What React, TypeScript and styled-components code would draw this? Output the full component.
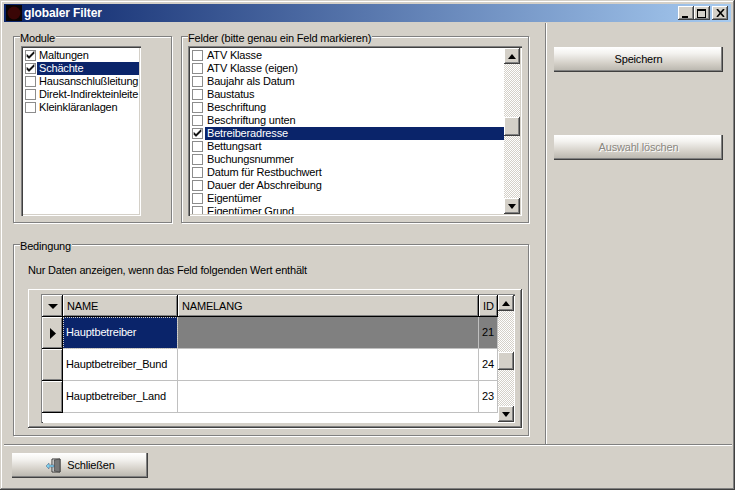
import React from "react";
import styled, { createGlobalStyle } from "styled-components";

const Global = createGlobalStyle`
  html, body { margin: 0; padding: 0; background: #d4d0c8; }
  * { box-sizing: border-box; }
`;
const FONT = `"Liberation Sans", Arial, sans-serif`;
const Window = styled.div`
  width: 735px; height: 490px; background: #d4d0c8; display: flex; flex-direction: column;
  padding: 4px 3px 3px 4px; font: 11px/13px ${FONT}; letter-spacing: -0.18px; color: #000; overflow: hidden;
  box-shadow: inset -1px -1px #404040, inset 1px 1px #d4d0c8, inset -2px -2px #808080, inset 2px 2px #fff;
`;
const TitleBar = styled.div`
  height: 18px; flex: none; display: flex; align-items: center; padding: 0 3px 0 2px; margin-right: 1px;
  background: linear-gradient(90deg, #0a246a, #a6caf0); color: #fff;
`;
const AppIcon = styled.svg`width: 16px; height: 16px; flex: none;`;
const TitleText = styled.div`font: bold 12px/16px "Liberation Sans", sans-serif; letter-spacing: -0.1px; margin-left: 2px; flex: 1;`;
const CaptionButtons = styled.div`display: flex;`;
const CaptionButton = styled.div<{ $gap?: boolean }>`
  width: 16px; height: 14px; margin-left: ${(p) => (p.$gap ? 2 : 0)}px; background: #d4d0c8;
  display: flex; align-items: center; justify-content: center;
  box-shadow: inset -1px -1px #404040, inset 1px 1px #fff, inset -2px -2px #808080;
`;
const Main = styled.div`flex: 1; display: flex; min-height: 0; margin-top: 1px;`;
const LeftArea = styled.div`
  width: 542px; flex: none; padding: 7px 0 0 9px; display: flex; flex-direction: column; gap: 15px;
  border-right: 1px solid #808080; box-shadow: 1px 0 #fff;
`;
const TopRow = styled.div`display: flex; gap: 9px;`;
const Group = styled.fieldset<{ $w: number; $h: number; $pad: number }>`
  margin: 0; min-width: 0; width: ${(p) => p.$w}px; height: ${(p) => p.$h}px; flex: none;
  border: 1px solid #808080; padding: 3px 0 0 ${(p) => p.$pad}px;
  box-shadow: 1px 1px #fff, inset 1px 1px #fff;
`;
const Legend = styled.legend<{ $shift: number }>`
  padding: 0 1px 0 0; margin-left: ${(p) => p.$shift}px; height: 13px; line-height: 17px; background: #d4d0c8;
`;
const ListBox = styled.div<{ $w: number }>`
  width: ${(p) => p.$w}px; height: 170px; background: #fff; padding: 2px; display: flex; overflow: hidden;
  box-shadow: inset 1px 1px #808080, inset 2px 2px #404040, inset -1px -1px #fff, inset -2px -2px #d4d0c8;
`;
const ListItems = styled.div`flex: 1; min-width: 0; overflow: hidden; padding-top: 1px;`;
const ListRow = styled.div`display: flex; height: 13px; padding-left: 2px; white-space: nowrap;`;
const Box = styled.div<{ $gap: number }>`
  width: 11px; height: 11px; flex: none; margin: 1px ${(p) => p.$gap}px 0 0; border: 1px solid #8c8c8c; background: #fff;
  display: flex; align-items: center; justify-content: center;
`;
const ItemLabel = styled.div<{ $sel?: boolean }>`
  flex: 1; min-width: 0; overflow: hidden; padding-left: 2px; height: 13px;
  background: ${(p) => (p.$sel ? "#0a246a" : "transparent")}; color: ${(p) => (p.$sel ? "#fff" : "#000")};
`;
const ScrollCol = styled.div<{ $h: number }>`width: 16px; height: ${(p) => p.$h}px; flex: none; display: flex; flex-direction: column;`;
const ScrollButton = styled.div<{ $h?: number }>`
  height: ${(p) => p.$h ?? 16}px; flex: none; background: #d4d0c8; display: flex; align-items: center; justify-content: center;
  box-shadow: inset -1px -1px #404040, inset 1px 1px #fff, inset -2px -2px #808080;
`;
const Track = styled.div<{ $h: number }>`
  height: ${(p) => p.$h}px; flex: none;
  background: repeating-conic-gradient(#d4d0c8 0 25%, #fff 0 50%) 0 0 / 2px 2px;
`;
const Hint = styled.div`margin: 10px 0 12px 7px;`;
const GridPanel = styled.div`
  width: 494px; height: 139px; margin-left: 7px; padding: 5px 0 0 13px; background: #d4d0c8;
  box-shadow: inset -1px -1px #404040, inset 1px 1px #fff, inset -2px -2px #808080, 1px 1px #fff;
`;
const GridBox = styled.div`
  width: 474px; height: 129px; background: #fff; padding: 1px; display: flex;
  box-shadow: inset 1px 1px #808080, inset 2px 2px #404040, inset -1px -1px #fff;
`;
const GridTable = styled.div`
  width: 456px; display: grid; grid-template-columns: 21px 115px 301px 19px;
  grid-auto-rows: 32px; grid-template-rows: 22px; align-content: start; background: #fff; flex: none;
`;
const HeadCell = styled.div<{ $center?: boolean }>`
  background: #d4d0c8; display: flex; align-items: center; padding-left: ${(p) => (p.$center ? 0 : 4)}px;
  justify-content: ${(p) => (p.$center ? "center" : "flex-start")};
  box-shadow: inset -1px -1px #000, inset 1px 1px #fff, inset -2px -2px #808080;
`;
const RowHead = styled(HeadCell)`justify-content: center; padding: 0;`;
const Cell = styled.div<{ $kind?: "focus" | "dim" }>`
  display: flex; align-items: center; padding-left: 3px; padding-bottom: 1px;
  border-right: 1px solid #c0c0c0; border-bottom: 1px solid #c0c0c0;
  background: ${(p) => (p.$kind === "focus" ? "#0a246a" : p.$kind === "dim" ? "#808080" : "#fff")};
  color: ${(p) => (p.$kind === "focus" ? "#fff" : "#000")};
  outline: ${(p) => (p.$kind === "focus" ? "1px dotted #d4d0c8" : "none")}; outline-offset: -1px;
`;
const SidePanel = styled.div`flex: 1; padding: 24px 0 0 8px; display: flex; flex-direction: column; gap: 63px;`;
const PushButton = styled.button<{ $w: number }>`
  width: ${(p) => p.$w}px; height: 25px; padding: 0; border: 0; border-radius: 0; flex: none;
  font: 11px/13px ${FONT}; letter-spacing: -0.18px; color: #000; display: flex; align-items: center; justify-content: center; gap: 5px;
  background: linear-gradient(180deg, #ffffff 0%, #f4f3f0 25%, #d4d0c8 65%, #b5b2aa 100%);
  box-shadow: inset -1px -1px #404040, inset -2px -2px #808080;
  &:disabled { color: #8a8780; text-shadow: 1px 1px #fff; }
`;
const BottomBar = styled.div`
  height: 43px; flex: none; padding: 8px 0 0 8px; border-top: 1px solid #808080; box-shadow: inset 0 1px #fff;
`;

const Check = () => (
  <svg width="9" height="9" viewBox="0 0 9 9"><path d="M1 3.5l2 2 5-5v2l-5 5-2-2z" fill="#000" stroke="#000" strokeWidth="0.6" /></svg>
);
const Up = () => <svg width="8" height="5" viewBox="0 0 8 5"><path d="M4 0l4 5H0z" fill="#000" /></svg>;
const Down = () => <svg width="8" height="5" viewBox="0 0 8 5"><path d="M0 0h8L4 5z" fill="#000" /></svg>;

const Scroll = ({ h, before, thumb, after }: { h: number; before: number; thumb: number; after: number }) => (
  <ScrollCol $h={h}>
    <ScrollButton><Up /></ScrollButton>
    <Track $h={before} />
    <ScrollButton $h={thumb} />
    <Track $h={after} />
    <ScrollButton><Down /></ScrollButton>
  </ScrollCol>
);

const Items = ({ rows, gap }: { rows: { t: string; c?: boolean; s?: boolean }[]; gap: number }) => (
  <ListItems>
    {rows.map((r) => (
      <ListRow key={r.t}>
        <Box $gap={gap}>{r.c && <Check />}</Box>
        <ItemLabel $sel={r.s}>{r.t}</ItemLabel>
      </ListRow>
    ))}
  </ListItems>
);

const modules = [
  { t: "Maltungen", c: true },
  { t: "Schächte", c: true, s: true },
  { t: "Hausanschlußleitung" },
  { t: "Direkt-Indirekteinleite" },
  { t: "Kleinkläranlagen" },
];
const felder = [
  { t: "ATV Klasse" }, { t: "ATV Klasse (eigen)" }, { t: "Baujahr als Datum" }, { t: "Baustatus" },
  { t: "Beschriftung" }, { t: "Beschriftung unten" }, { t: "Betreiberadresse", c: true, s: true },
  { t: "Bettungsart" }, { t: "Buchungsnummer" }, { t: "Datum für Restbuchwert" },
  { t: "Dauer der Abschreibung" }, { t: "Eigentümer" }, { t: "Eigentümer Grund" },
];
const rows = [
  { name: "Hauptbetreiber", id: "21", active: true },
  { name: "Hauptbetreiber_Bund", id: "24" },
  { name: "Hauptbetreiber_Land", id: "23" },
];

export default function App() {
  return (
    <Window>
      <Global />
      <TitleBar>
        <AppIcon viewBox="0 0 16 16"><rect width="16" height="16" fill="#0a0404" /><circle cx="8" cy="8" r="6.5" fill="#3a0606" /></AppIcon>
        <TitleText>globaler Filter</TitleText>
        <CaptionButtons>
          <CaptionButton><svg width="10" height="9" viewBox="0 0 10 9"><rect x="1" y="7" width="6" height="2" fill="#000" /></svg></CaptionButton>
          <CaptionButton><svg width="10" height="9" viewBox="0 0 10 9"><path d="M0 0h9v9H0zM1 2v6h7V2z" fill="#000" fillRule="evenodd" /></svg></CaptionButton>
          <CaptionButton $gap><svg width="9" height="8" viewBox="0 0 9 8"><path d="M1 0l7 8M8 0L1 8" stroke="#000" strokeWidth="1.6" /></svg></CaptionButton>
        </CaptionButtons>
      </TitleBar>
      <Main>
        <LeftArea>
          <TopRow>
            <Group $w={159} $h={193} $pad={7}>
              <Legend $shift={-1}>Module</Legend>
              <ListBox $w={120}><Items rows={modules} gap={1} /></ListBox>
            </Group>
            <Group $w={348} $h={193} $pad={6}>
              <Legend $shift={0}>Felder (bitte genau ein Feld markieren)</Legend>
              <ListBox $w={334}>
                <Items rows={felder} gap={2} />
                <Scroll h={166} before={53} thumb={19} after={62} />
              </ListBox>
            </Group>
          </TopRow>
          <Group $w={516} $h={198} $pad={7}>
            <Legend $shift={-1}>Bedingung</Legend>
            <Hint>Nur Daten anzeigen, wenn das Feld folgenden Wert enthält</Hint>
            <GridPanel>
              <GridBox>
                <GridTable>
                  <HeadCell $center><svg width="10" height="5" viewBox="0 0 10 5"><path d="M0 0h10L5 5z" fill="#000" /></svg></HeadCell>
                  <HeadCell>NAME</HeadCell>
                  <HeadCell>NAMELANG</HeadCell>
                  <HeadCell>ID</HeadCell>
                  {rows.map((r) => (
                    <React.Fragment key={r.name}>
                      <RowHead>{r.active && <svg width="6" height="11" viewBox="0 0 6 11"><path d="M0 0l6 5.5L0 11z" fill="#000" /></svg>}</RowHead>
                      <Cell $kind={r.active ? "focus" : undefined}>{r.name}</Cell>
                      <Cell $kind={r.active ? "dim" : undefined} />
                      <Cell $kind={r.active ? "dim" : undefined}>{r.id}</Cell>
                    </React.Fragment>
                  ))}
                </GridTable>
                <Scroll h={127} before={41} thumb={18} after={36} />
              </GridBox>
            </GridPanel>
          </Group>
        </LeftArea>
        <SidePanel>
          <PushButton $w={169}>Speichern</PushButton>
          <PushButton $w={169} disabled>Auswahl löschen</PushButton>
        </SidePanel>
      </Main>
      <BottomBar>
        <PushButton $w={136}>
          <svg width="17" height="15" viewBox="0 0 17 15">
            <path d="M7 1h8v13H7z" fill="#fff" stroke="#333" />
            <path d="M9 2l6-1v13l-6-1z" fill="#777" stroke="#333" strokeWidth="0.6" />
            <path d="M1 8l3-3v2h5v2H4v2z" fill="#7fd0ee" stroke="#346" strokeWidth="0.4" />
          </svg>
          Schließen
        </PushButton>
      </BottomBar>
    </Window>
  );
}
